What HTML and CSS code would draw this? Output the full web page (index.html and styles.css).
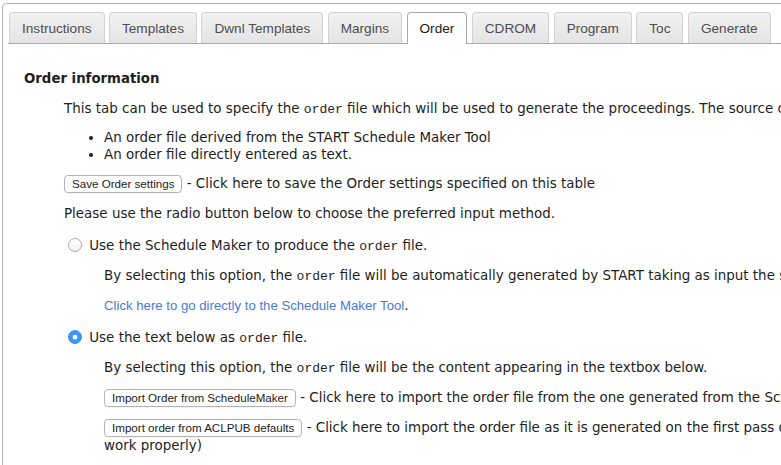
FILE: index.html
```html
<!DOCTYPE html>
<html lang="en">
<head>
<meta charset="utf-8">
<title>Order</title>
<link rel="stylesheet" href="styles.css">
</head>
<body>
<div class="tabs">
  <ul class="nav">
    <li class="tab">Instructions</li>
    <li class="tab">Templates</li>
    <li class="tab">Dwnl Templates</li>
    <li class="tab">Margins</li>
    <li class="tab active">Order</li>
    <li class="tab">CDROM</li>
    <li class="tab">Program</li>
    <li class="tab">Toc</li>
    <li class="tab">Generate</li>
  </ul>
  <div class="panel">
    <h3 class="title">Order information</h3>
    <div class="body">
      <p class="para intro">This tab can be used to specify the <code>order</code> file which will be used to generate the proceedings. The source can be:</p>
      <ul class="bullets">
        <li>An order file derived from the START Schedule Maker Tool</li>
        <li>An order file directly entered as text.</li>
      </ul>
      <p class="para"><button class="btn" type="button">Save Order settings</button> - Click here to save the Order settings specified on this table</p>
      <p class="para">Please use the radio button below to choose the preferred input method.</p>
      <p class="para opt"><input class="radio" type="radio" name="method"> Use the Schedule Maker to produce the <code>order</code> file.</p>
      <div class="sub">
        <p class="para">By selecting this option, the <code>order</code> file will be automatically generated by START taking as input the schedule.</p>
        <p class="para"><a class="link" href="#">Click here to go directly to the Schedule Maker Tool</a>.</p>
      </div>
      <p class="para opt"><input class="radio" type="radio" name="method" checked> Use the text below as <code>order</code> file.</p>
      <div class="sub">
        <p class="para">By selecting this option, the <code>order</code> file will be the content appearing in the textbox below.</p>
        <p class="para"><button class="btn" type="button">Import Order from ScheduleMaker</button> - Click here to import the order file from the one generated from the ScheduleMaker.</p>
        <p class="para"><button class="btn" type="button">Import order from ACLPUB defaults</button> - Click here to import the order file as it is generated on the first pass of ACLPUB (needed to<br>work properly)</p>
      </div>
    </div>
  </div>
</div>
</body>
</html>
```
FILE: styles.css
```css
html, body {
  margin: 0;
  overflow: hidden;
}

body {
  font-family: "DejaVu Sans", Verdana, sans-serif;
  font-size: 13.45px;
  color: #1e1e1e;
  background: #fff;
}

.tabs {
  width: 1200px;
  min-height: 520px;
  margin: 3px 0 0 2px;
  padding: 8px 5px 0 5px;
  border: 1px solid #b4b4b4;
  border-radius: 4px;
}

.nav {
  display: flex;
  gap: 4.5px;
  list-style: none;
  margin: 0;
  padding: 0 0 0 1px;
  border-bottom: 1px solid #aaa;
}

.tab {
  height: 30px;
  line-height: 31px;
  padding: 0 12px;
  border: 1px solid #d3d3d3;
  border-bottom: none;
  border-radius: 4px 4px 0 0;
  background: linear-gradient(#f1f1f1, #e4e4e4);
  font-family: "Liberation Sans", Arial, sans-serif;
  font-size: 13.6px;
  color: #4e4e4e;
}

.tab.active {
  height: 31px;
  margin-bottom: -1px;
  background: #fff;
  border-color: #aaa;
  color: #1a1a1a;
}

.panel {
  padding: 26px 0 0 16px;
}

.title {
  margin: 0;
  font-size: 13.3px;
  font-weight: bold;
  line-height: 17px;
}

.body {
  margin-left: 40px;
}

.para {
  margin: 12px 0 0;
  line-height: 17px;
}

.para.intro {
  margin-top: 13px;
}

code {
  font-family: "Liberation Mono", "Courier New", monospace;
  font-size: 13px;
}

.bullets {
  margin: 11px 0 0;
  padding-left: 40px;
  line-height: 17px;
}

.btn {
  height: 18px;
  padding: 0 7px;
  border: 1px solid #b4b4b4;
  border-radius: 4px;
  background: #fff;
  color: #222;
  font-family: "Liberation Sans", Arial, sans-serif;
  font-size: 11.6px;
  line-height: 16px;
  vertical-align: middle;
  box-shadow: 0 1px 0 rgba(0, 0, 0, 0.04);
}

.opt {
  margin-top: 15px;
}

.radio {
  appearance: none;
  -webkit-appearance: none;
  width: 14px;
  height: 14px;
  margin: 0 3px 0 4px;
  vertical-align: -2px;
  border: 1px solid #a9a9a9;
  border-radius: 50%;
  background: linear-gradient(#fff, #f4f4f4);
}

.radio:checked {
  border-color: #3a8ef0;
  background: radial-gradient(circle, #fff 0 2px, #3b99fc 2.7px);
}

.sub {
  margin-left: 40px;
}

.link {
  color: #4a7bd4;
  font-family: "Liberation Sans", Arial, sans-serif;
  font-size: 13.2px;
  text-decoration: none;
}
```
